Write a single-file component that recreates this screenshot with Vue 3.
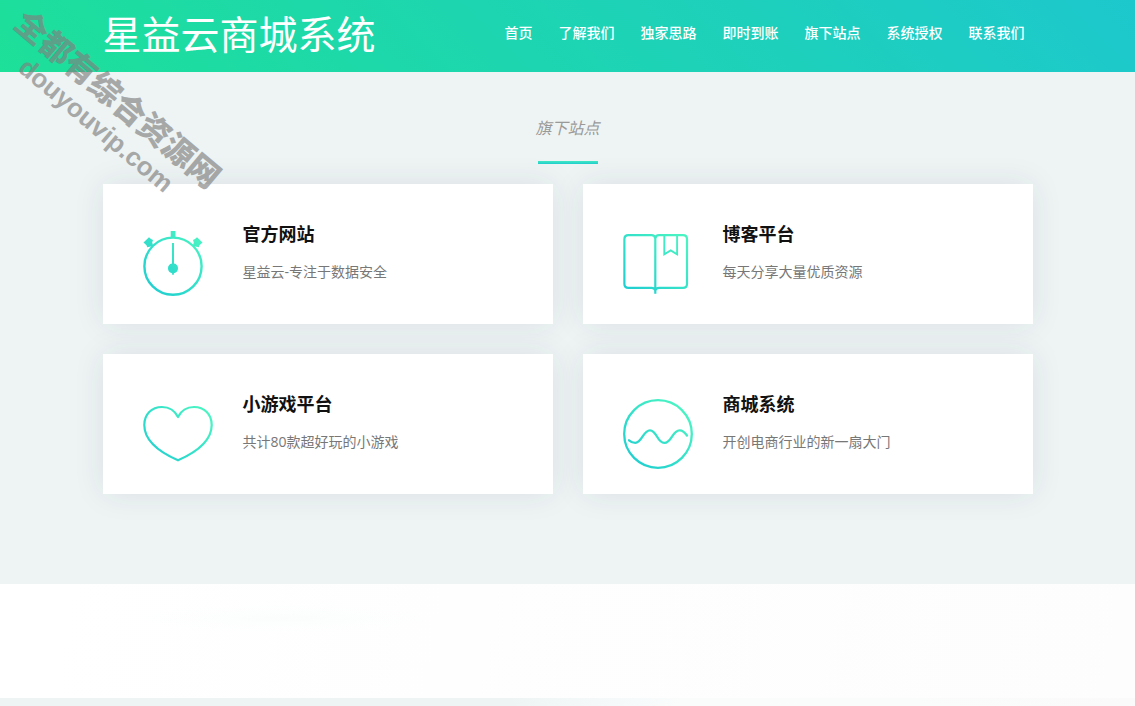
<script setup>
const links = ['首页', '了解我们', '独家思路', '即时到账', '旗下站点', '系统授权', '联系我们']

const sites = [
  { icon: 'watch', title: '官方网站', text: '星益云-专注于数据安全' },
  { icon: 'book', title: '博客平台', text: '每天分享大量优质资源' },
  { icon: 'heart', title: '小游戏平台', text: '共计80款超好玩的小游戏' },
  { icon: 'wave', title: '商城系统', text: '开创电商行业的新一扇大门' },
]
</script>

<template>
  <div class="page">
    <header class="header">
      <div class="container header-row">
        <h1 class="logo">星益云商城系统</h1>
        <nav class="nav">
          <a v-for="link in links" :key="link" href="#">{{ link }}</a>
        </nav>
      </div>
    </header>

    <main>
      <section class="sites">
        <div class="container">
          <h2 class="section-title">旗下站点</h2>
          <div class="grid">
            <article v-for="site in sites" :key="site.title" class="card">
              <svg class="icon" viewBox="0 0 70 70" aria-hidden="true">
                <defs>
                  <linearGradient :id="'g-' + site.icon" gradientUnits="userSpaceOnUse" x1="8" y1="62" x2="60" y2="8">
                    <stop offset="0" stop-color="#20cfd0" />
                    <stop offset="1" stop-color="#4af4c2" />
                  </linearGradient>
                </defs>
                <g v-if="site.icon === 'watch'" :stroke="`url(#g-${site.icon})`" :fill="`url(#g-${site.icon})`">
                  <circle cx="30" cy="37.2" r="28.6" fill="none" stroke-width="2.4" />
                  <path stroke="none" d="M27.7 2h4.8v6.5h-4.8zM.5 13.500 6 8.300l2 1.800 2 .8-.8 2.600 1 3.500-6 1.200-.7-2zM59.500 13.500 54 8.300l-2 1.800-2 .8.8 2.600-1 3.500 6 1.200.7-2z" />
                  <path stroke="none" d="M29 14h2v20.4a5 5 0 0 1 0 9.8L30.5 46h-1L29 44.200a5 5 0 0 1 0-9.8z" />
                </g>
                <g v-else-if="site.icon === 'book'" :stroke="`url(#g-${site.icon})`" fill="none" stroke-width="2.200">
                  <path d="M32.300 64.700V9.500C32 7.300 30.500 6.200 28.500 6.200H5.500Q1.400 6.200 1.400 10.200V55Q1.400 58.900 5.500 58.900H28.500Q31.500 58.900 32.300 61.500Q33.200 58.900 36 58.900H60Q64 58.900 64 55V10.200Q64 6.200 60 6.200H36C34 6.200 32.600 7.300 32.300 9.500" />
                  <path stroke-width="1.900" d="M41.300 6v19.300l6.400-3.900 6.400 3.900V6" />
                </g>
                <path
                  v-else-if="site.icon === 'heart'"
                  :stroke="`url(#g-${site.icon})`"
                  fill="none"
                  stroke-width="2.200"
                  stroke-linejoin="round"
                  d="M35 18C31.500 11 25.500 8 19 8C8.500 8 1.300 15.500 1.300 26C1.300 41 15 52.500 35 61.300C55 52.500 68.700 41 68.700 26C68.700 15.500 61.500 8 51 8C44.500 8 38.500 11 35 18Z"
                />
                <g v-else :stroke="`url(#g-${site.icon})`" fill="none" stroke-width="2.300" stroke-linecap="round">
                  <circle cx="35" cy="35" r="33.8" />
                  <path d="M6 41.300C8 43 10 43.900 12.300 43.900C19 43.900 20 31.300 27 31.300C34 31.300 34 43.900 41.300 43.900C49 43.900 49 31.300 56.700 31.300C60 31.300 62 33.500 64 36.500" />
                </g>
              </svg>
              <div>
                <h3>{{ site.title }}</h3>
                <p>{{ site.text }}</p>
              </div>
            </article>
          </div>
        </div>
      </section>
      <section class="band"></section>
    </main>
    <div class="tail"></div>

    <div class="watermark">
      <span class="watermark-name">全都有综合资源网</span>
      <span class="watermark-url">douyouvip.com</span>
    </div>
  </div>
</template>

<style>
body {
  margin: 0;
  background: #eef4f4;
}
</style>

<style scoped>
.page {
  position: relative;
  display: flex;
  flex-direction: column;
  min-height: 100vh;
  overflow: hidden;
  font-family: "Open Sans", "Noto Sans CJK SC", sans-serif;
  font-size: 14px;
  line-height: 24px;
  color: #777;
}

.container {
  box-sizing: border-box;
  max-width: 960px;
  margin: 0 auto;
  padding: 0 15px;
}

.header {
  background: linear-gradient(45deg, #1de099, #1dc8cd);
}

.header-row {
  display: flex;
  align-items: flex-start;
  justify-content: space-between;
}

.logo {
  margin: 0;
  padding-bottom: 4px;
  font-size: 39px;
  font-weight: 400;
  line-height: 68px;
  color: #fff;
}

.nav {
  display: flex;
  gap: 26px;
  padding: 21px 8px 0 0;
}

.nav a {
  font-weight: 500;
  color: #fff;
  text-decoration: none;
}

.sites {
  padding: 44px 0 90px;
  background: #eef4f4;
}

.section-title {
  margin: 0 0 20px;
  font-size: 16px;
  font-style: italic;
  font-weight: 400;
  line-height: 24px;
  text-align: center;
  color: #999;
}

.section-title::after {
  content: "";
  display: block;
  width: 60px;
  height: 3px;
  margin: 21px auto 0;
  background: linear-gradient(#42e8c4, #20cfcd);
}

.grid {
  display: grid;
  grid-template-columns: repeat(2, 1fr);
  gap: 30px;
}

.card {
  display: flex;
  gap: 30px;
  box-sizing: border-box;
  min-height: 140px;
  padding: 38px 40px 25px;
  background: #fff;
  box-shadow: 0 0 30px rgba(31, 45, 61, 0.09);
}

.icon {
  flex: none;
  width: 70px;
  height: 70px;
  margin-top: 7px;
}

.card h3 {
  margin: 0 0 14px;
  font-size: 18px;
  font-weight: 700;
  line-height: 24px;
  color: #111;
}

.card p {
  margin: 0;
}

.band {
  height: 114px;
  background:
    radial-gradient(ellipse at 25% 30%, #fbfdfd, transparent 12%),
    linear-gradient(100deg, #fff 5%, #fefefe 40%, #fdfdfd);
}

.tail {
  flex: 1;
  min-height: 8px;
  background: linear-gradient(90deg, #eef4f4 45%, #fafcfc 60%, #fafafa);
}

.watermark {
  position: absolute;
  top: 78px;
  left: -29px;
  display: flex;
  flex-direction: column;
  align-items: center;
  width: 272px;
  font-weight: 700;
  line-height: 34px;
  color: #808080;
  opacity: 0.65;
  transform: rotate(40deg);
  pointer-events: none;
}

.watermark-name {
  font-size: 32px;
  font-weight: 900;
}

.watermark-url {
  font-family: "Liberation Sans", sans-serif;
  font-size: 26px;
}
</style>
